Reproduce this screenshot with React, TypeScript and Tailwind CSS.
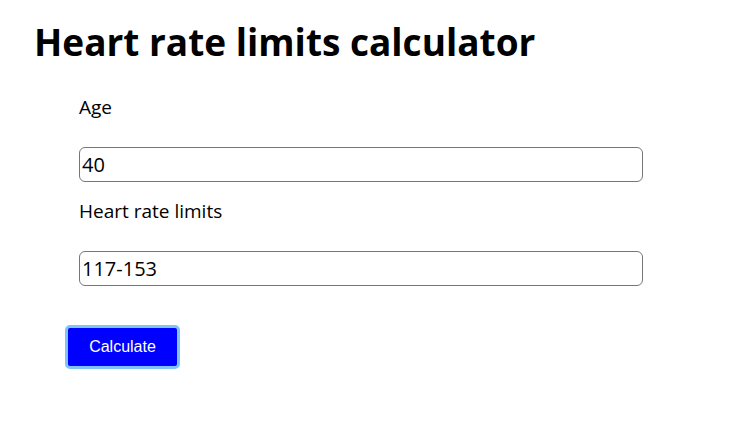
import React from "react";

export default function App() {
  return (
    <div className="min-h-screen bg-white text-black" style={{ fontFamily: '"Open Sans", "Noto Sans", sans-serif' }}>
      <h1 className="pl-[34px] pt-[15px] text-[37px] font-bold leading-[54px]">
        Heart rate limits calculator
      </h1>
      <div className="pl-[79px] pt-[26px] w-[643px]">
        <label className="block text-[19px] leading-[24px]">Age</label>
        <input
          className="mt-[28px] block w-[564px] h-[35px] border border-[#767676] rounded-[6px] px-[2px] text-[20px] outline-none"
          defaultValue="40"
        />
        <label className="block mt-[17px] text-[19px] leading-[24px]">Heart rate limits</label>
        <input
          className="mt-[28px] block w-[564px] h-[35px] border border-[#767676] rounded-[6px] px-[2px] text-[20px] outline-none"
          defaultValue="117-153"
        />
      </div>
      <div className="pl-[65px] pt-[39px]">
        <button
          className="w-[115px] h-[44px] bg-[#0000ff] text-white text-[16px] rounded-[5px] border-[3px] border-[#7cc4fa]"
          style={{ fontFamily: '"Liberation Sans", Arial, sans-serif' }}
        >
          Calculate
        </button>
      </div>
    </div>
  );
}
